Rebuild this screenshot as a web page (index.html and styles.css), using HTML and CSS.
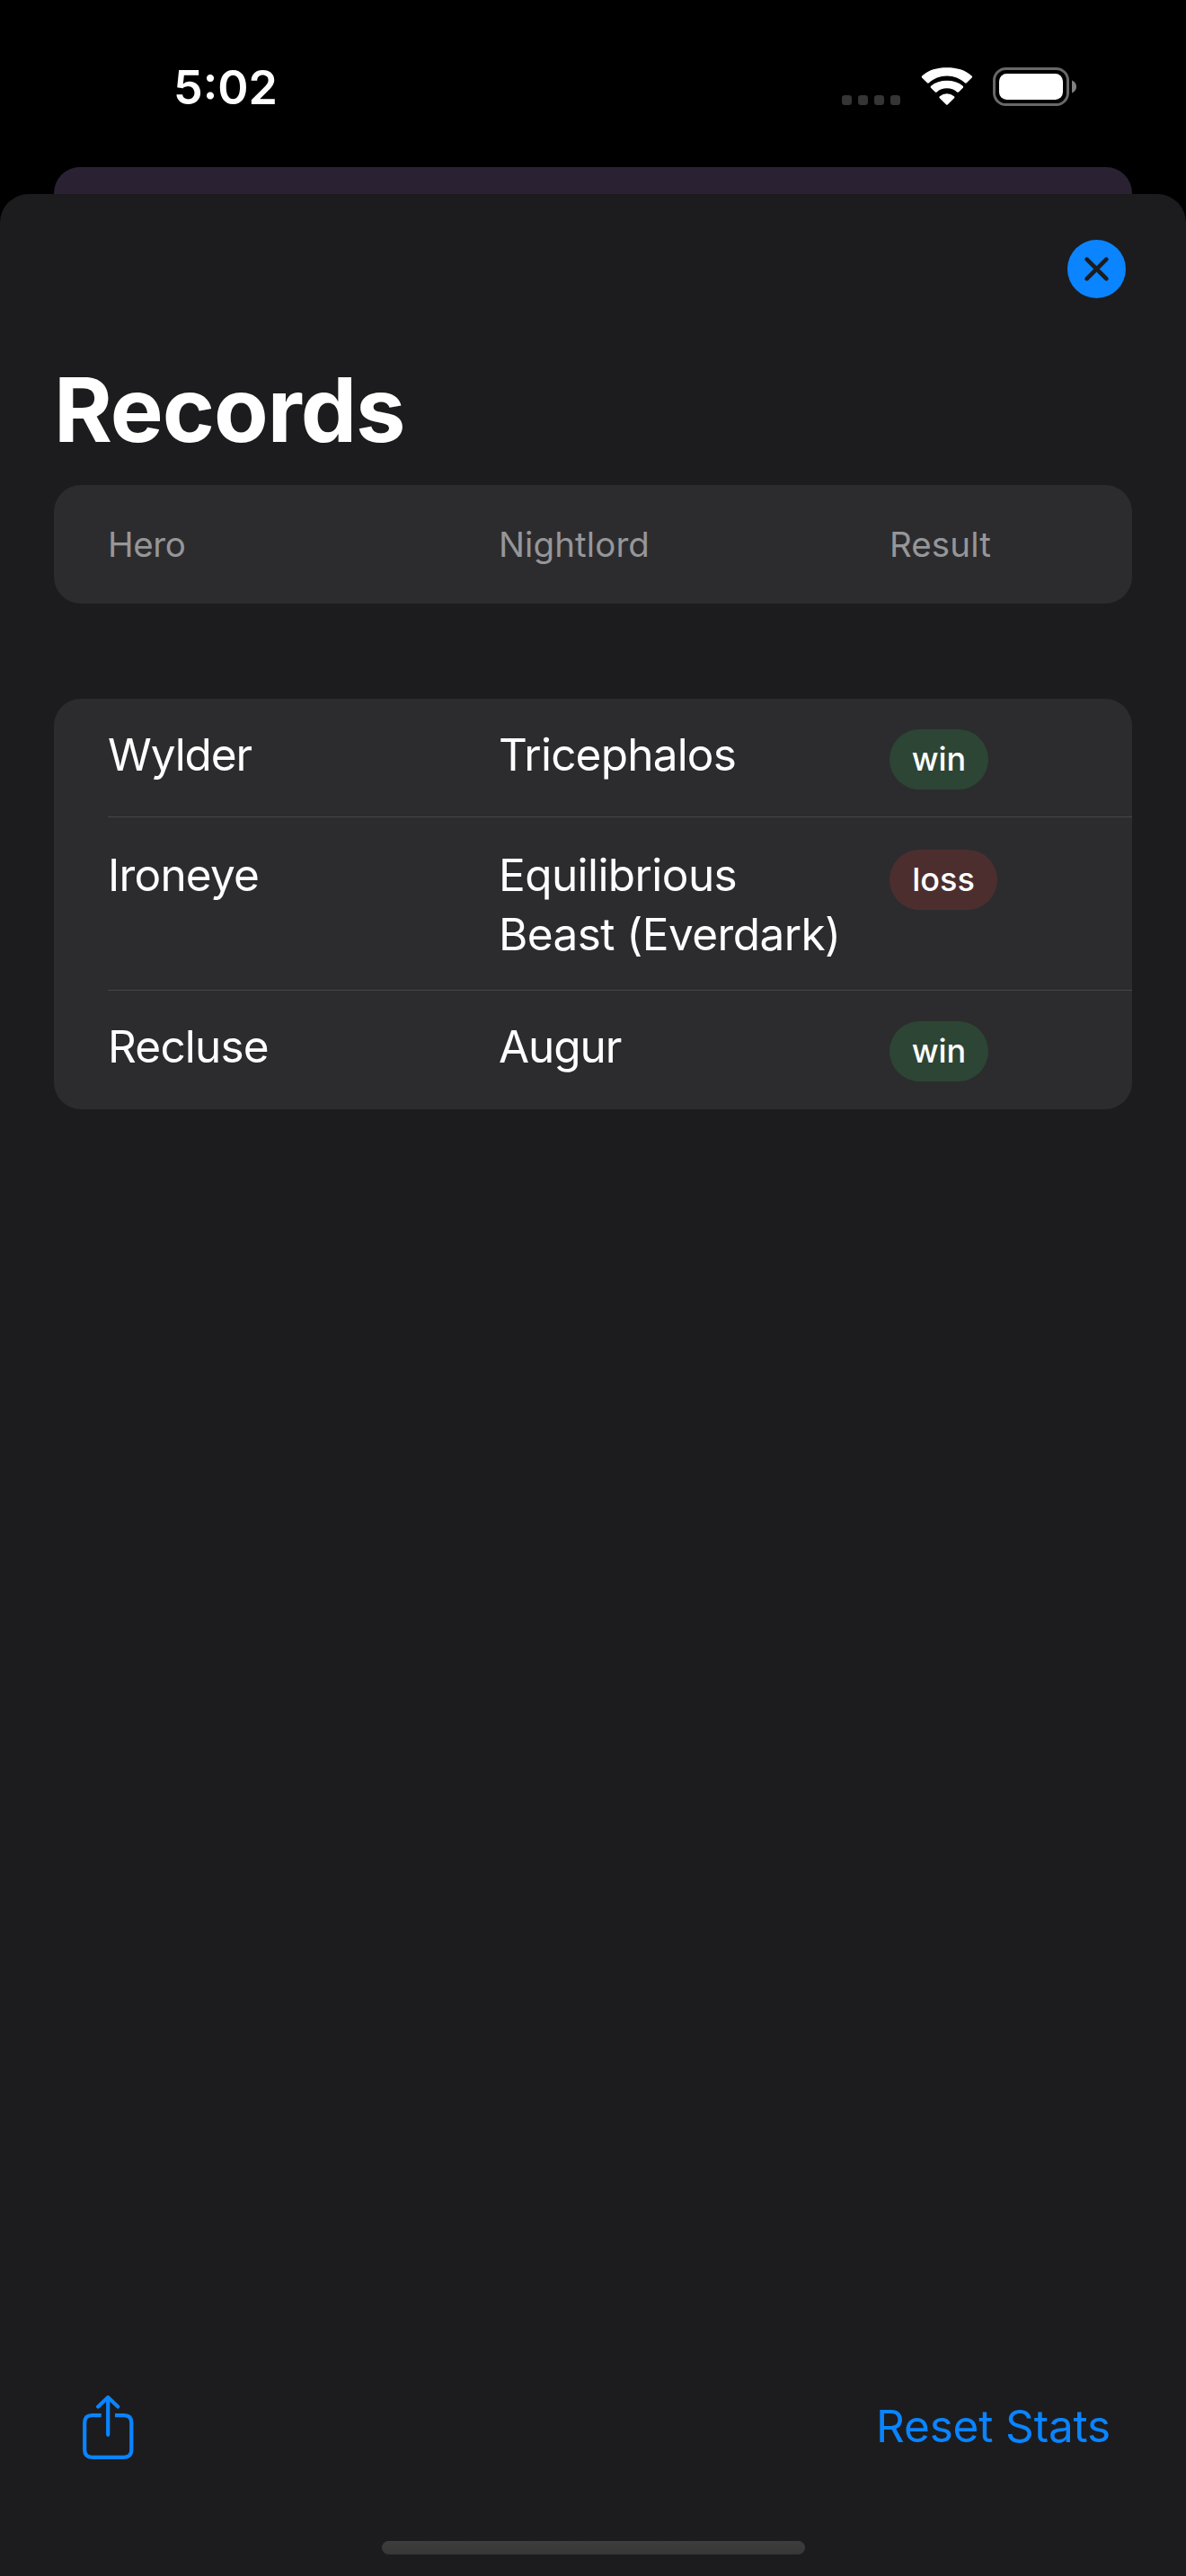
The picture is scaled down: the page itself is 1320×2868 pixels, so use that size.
FILE: index.html
```
<!DOCTYPE html>
<html lang="en">
<head>
<meta charset="utf-8">
<title>Records</title>
<link rel="stylesheet" href="styles.css">
</head>
<body>
<div class="screen">
  <header class="status">
    <span class="time">5:02</span>
    <div class="indicators">
      <svg class="cell" width="65" height="11" viewBox="0 0 65 11" fill="#353535"><rect width="11" height="11" rx="3.3"/><rect x="18" width="11" height="11" rx="3.3"/><rect x="36" width="11" height="11" rx="3.3"/><rect x="54" width="11" height="11" rx="3.3"/></svg>
      <svg class="wifi" width="58" height="42" viewBox="0 0 58 42" fill="#fff">
        <path d="M28.9 9.3C36.6 9.3 43.6 12.2 48.9 17Q49.8 17.9 50.8 17L56.7 11.2Q57.7 10.2 56.6 9.2C49.3 2.5 39.6 0 28.9 0C18.2 0 8.5 2.5 1.2 9.2Q0.1 10.2 1.1 11.2L7 17Q8 17.9 8.9 17C14.2 12.2 21.2 9.3 28.9 9.3Z" transform="translate(0 .3)"/>
        <path d="M28.9 23.3C33.2 23.3 37.1 24.8 40.1 27.4Q41.1 28.3 42 27.4L46.8 22.7Q47.8 21.7 46.7 20.7C42 16.8 35.7 14.8 28.9 14.8C22.1 14.8 15.8 16.8 11.1 20.7Q10 21.7 11 22.7L15.8 27.4Q16.7 28.3 17.7 27.4C20.7 24.8 24.6 23.3 28.9 23.3Z"/>
        <path d="M37 34.2Q38 33.1 36.9 32.2Q33.4 29.2 28.9 29.2Q24.4 29.2 20.9 32.2Q19.8 33.1 20.8 34.2L27.9 41.2Q28.9 42.2 29.9 41.2Z"/>
      </svg>
      <svg class="battery" width="94" height="43" viewBox="0 0 94 43"><rect x="1.5" y="1.5" width="82" height="40" rx="13" fill="none" stroke="#686868" stroke-width="3"/><rect x="7" y="7" width="71" height="29" rx="8.5" fill="#fff"/><path d="M88 14.5C91.500 16 93 18.500 93 21.500S91.500 27 88 28.500Z" fill="#808080"/></svg>
    </div>
  </header>
  <div class="backdrop"></div>
  <main class="sheet">
    <div class="topbar">
      <button class="close" aria-label="Close"><svg width="65" height="65" viewBox="0 0 65 65"><circle cx="32.500" cy="32.500" r="32.500" fill="#0a84ff"/><path d="M21.600 21.600L43.400 43.400M43.400 21.600L21.600 43.400" stroke="#1c1c1e" stroke-width="4.600" stroke-linecap="round"/></svg></button>
    </div>
    <h1 class="title">Records</h1>
    <section class="card head">
      <span class="hero">Hero</span><span>Nightlord</span><span>Result</span>
    </section>
    <section class="card list">
      <div class="row"><span class="tight">Wylder</span><span class="snug">Tricephalos</span><span class="pill win">win</span></div>
      <div class="row tall"><span class="snug">Ironeye</span><span>Equilibrious Beast (Everdark)</span><span class="pill loss">loss</span></div>
      <div class="row"><span class="snug">Recluse</span><span class="tight">Augur</span><span class="pill win">win</span></div>
    </section>
    <footer class="toolbar">
      <svg width="57" height="72" viewBox="0 0 57 72" fill="none" stroke="#0a84ff" stroke-width="4.200"><path d="M20.700 22.100H10.500Q2.200 22.100 2.200 30.400V60.600Q2.200 68.900 10.500 68.900H46Q54.300 68.900 54.300 60.600V30.400Q54.300 22.100 46 22.100H36"/><path d="M28.200 3V43.800M17.200 12.500L28.200 2L39.200 12.500" stroke-linecap="round" stroke-linejoin="round"/></svg>
      <button class="reset">Reset Stats</button>
    </footer>
    <div class="home"></div>
  </main>
</div>
</body>
</html>
```
FILE: styles.css
```
* { box-sizing: border-box; }
body { margin: 0; background: #000; }
button { border: 0; padding: 0; background: none; font: inherit; color: inherit; }
svg { display: block; }

.screen {
  width: 1320px;
  height: 2868px;
  display: flex;
  flex-direction: column;
  background: #000;
  color: #fff;
  font-family: Inter, "Liberation Sans", sans-serif;
  font-size: 49.5px;
  line-height: 66px;
  letter-spacing: -0.58px;
}

.status {
  height: 186px;
  padding: 68px 121px 0 193px;
  display: flex;
  justify-content: space-between;
  align-items: flex-start;
}
.time { font-size: 52px; font-weight: 600; line-height: 60px; letter-spacing: 0; }
.indicators { display: flex; align-items: flex-start; padding-top: 7px; }
.cell { margin: 31px 23px 0 0; }
.wifi { margin-right: 22px; }

.backdrop {
  height: 30px;
  margin: 0 60px;
  border-radius: 29px 29px 0 0;
  background: #2a2133;
}

.sheet {
  flex: 1;
  display: flex;
  flex-direction: column;
  padding: 51px 60px 24px;
  border-radius: 32px 32px 0 0;
  background: #1c1c1e;
}
.topbar { display: flex; justify-content: flex-end; height: 129px; padding-right: 7px; }
.close { width: 65px; height: 65px; }
.title {
  margin: 0 0 24px;
  font-size: 99px;
  font-weight: 700;
  line-height: 120px;
  letter-spacing: -1px;
}

.card { border-radius: 30px; background: #2c2c2e; }
.head, .row {
  display: grid;
  grid-template-columns: 405px 405px 1fr;
  column-gap: 30px;
}
.head {
  height: 132px;
  padding-left: 60px;
  font-size: 38.5px;
  line-height: 132px;
  letter-spacing: 0.1px;
  color: #969698;
}
.hero { letter-spacing: -0.4px; }

.list { margin-top: 106px; padding-left: 60px; }
.row { height: 132px; padding-top: 29px; align-items: start; }
.row:not(:last-child) { border-bottom: 1px solid #464649; }
.row.tall { height: 193px; padding-top: 31px; }
.tight { letter-spacing: -1.1px; }
.snug { letter-spacing: -0.8px; }

.pill {
  width: 110px;
  height: 67px;
  margin-top: 5px;
  border-radius: 34px;
  font-size: 36px;
  font-weight: 550;
  line-height: 66px;
  letter-spacing: 0;
  text-align: center;
}
.win { background: #2c4534; }
.loss { width: 120px; background: #4c2e2f; }

.toolbar {
  margin-top: auto;
  height: 72px;
  padding: 0 24px 0 32px;
  display: flex;
  justify-content: space-between;
}
.reset { height: 66px; margin-top: 1px; color: #0a84ff; line-height: 66px; letter-spacing: -0.18px; }

.home {
  width: 471px;
  height: 15px;
  margin: 90px auto 0;
  border-radius: 8px;
  background: linear-gradient(#3d3d3d, #373737);
}
```
